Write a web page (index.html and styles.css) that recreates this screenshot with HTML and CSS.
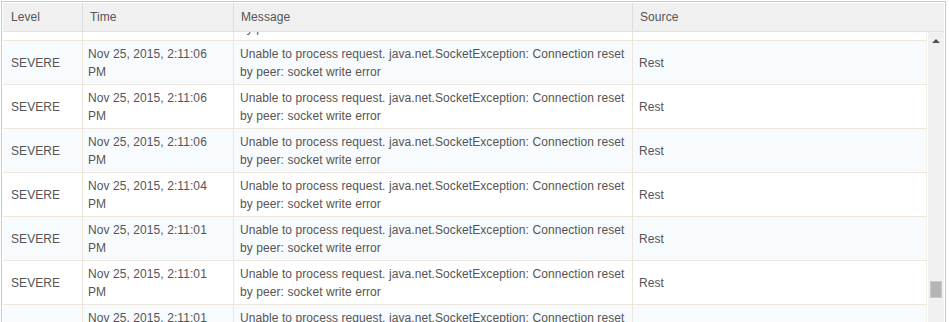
FILE: index.html
```html
<!DOCTYPE html>
<html>
<head>
<meta charset="utf-8">
<link rel="stylesheet" href="styles.css">
</head>
<body>
<div class="grid-wrap">
  <div class="header">
    <div class="hcell c-level">Level</div>
    <div class="hcell c-time">Time</div>
    <div class="hcell c-msg">Message</div>
    <div class="hcell c-src">Source</div>
    <div class="hcell c-pad"></div>
  </div>
  <div class="body">
    <div class="viewport">
      <div class="rows">
        <div class="row odd">
          <div class="cell c-level">SEVERE</div>
          <div class="cell c-time">Nov 25, 2015, 2:11:06<br>PM</div>
          <div class="cell c-msg">Unable to process request. java.net.SocketException: Connection reset<br>by peer: socket write error</div>
          <div class="cell c-src">Rest</div>
        </div>
        <div class="row even">
          <div class="cell c-level">SEVERE</div>
          <div class="cell c-time">Nov 25, 2015, 2:11:06<br>PM</div>
          <div class="cell c-msg">Unable to process request. java.net.SocketException: Connection reset<br>by peer: socket write error</div>
          <div class="cell c-src">Rest</div>
        </div>
        <div class="row odd">
          <div class="cell c-level">SEVERE</div>
          <div class="cell c-time">Nov 25, 2015, 2:11:06<br>PM</div>
          <div class="cell c-msg">Unable to process request. java.net.SocketException: Connection reset<br>by peer: socket write error</div>
          <div class="cell c-src">Rest</div>
        </div>
        <div class="row even">
          <div class="cell c-level">SEVERE</div>
          <div class="cell c-time">Nov 25, 2015, 2:11:06<br>PM</div>
          <div class="cell c-msg">Unable to process request. java.net.SocketException: Connection reset<br>by peer: socket write error</div>
          <div class="cell c-src">Rest</div>
        </div>
        <div class="row odd">
          <div class="cell c-level">SEVERE</div>
          <div class="cell c-time">Nov 25, 2015, 2:11:04<br>PM</div>
          <div class="cell c-msg">Unable to process request. java.net.SocketException: Connection reset<br>by peer: socket write error</div>
          <div class="cell c-src">Rest</div>
        </div>
        <div class="row even">
          <div class="cell c-level">SEVERE</div>
          <div class="cell c-time">Nov 25, 2015, 2:11:01<br>PM</div>
          <div class="cell c-msg">Unable to process request. java.net.SocketException: Connection reset<br>by peer: socket write error</div>
          <div class="cell c-src">Rest</div>
        </div>
        <div class="row odd">
          <div class="cell c-level">SEVERE</div>
          <div class="cell c-time">Nov 25, 2015, 2:11:01<br>PM</div>
          <div class="cell c-msg">Unable to process request. java.net.SocketException: Connection reset<br>by peer: socket write error</div>
          <div class="cell c-src">Rest</div>
        </div>
        <div class="row even">
          <div class="cell c-level">SEVERE</div>
          <div class="cell c-time">Nov 25, 2015, 2:11:01<br>PM</div>
          <div class="cell c-msg">Unable to process request. java.net.SocketException: Connection reset<br>by peer: socket write error</div>
          <div class="cell c-src">Rest</div>
        </div>
      </div>
    </div>
    <div class="scrollbar">
      <div class="arrow-up"></div>
      <div class="track">
        <div class="thumb"></div>
      </div>
    </div>
  </div>
</div>
</body>
</html>
```

FILE: styles.css
```css
html, body {
  margin: 0;
  padding: 0;
  background: #ffffff;
}

body {
  font-family: "Liberation Sans", Arial, sans-serif;
  font-size: 12px;
  letter-spacing: 0.08px;
  color: #555555;
}

.grid-wrap {
  margin: 1px 0 0 1px;
  width: 945px;
  height: 330px;
  box-sizing: border-box;
  border: 1px solid #c9c9c9;
  padding: 1px 1px 0 1px;
  display: flex;
  flex-direction: column;
  overflow: hidden;
}

.header {
  display: grid;
  grid-template-columns: 80px 151px 399px 294px 1fr;
  height: 28px;
  background: #f0f0f0;
  border-bottom: 1px solid #e6dfd3;
  flex: none;
}

.hcell {
  display: flex;
  align-items: center;
  padding: 0 7px;
  border-right: 1px solid #dcdcdc;
  line-height: 17px;
}

.hcell.c-level {
  padding-left: 8px;
}

.hcell.c-src,
.hcell.c-pad {
  border-right: none;
}

.body {
  flex: 1;
  display: flex;
  min-height: 0;
}

.viewport {
  width: 924px;
  overflow: hidden;
  flex: none;
}

.rows {
  margin-top: -35px;
}

.row {
  display: grid;
  grid-template-columns: 80px 151px 399px 294px;
  border-bottom: 1px solid #ede6dc;
}

.row.even {
  background: #f7fbfe;
}

.row.odd {
  background: #ffffff;
}

.cell {
  display: flex;
  align-items: center;
  padding: 4px 6px 3px 6px;
  line-height: 18px;
  border-right: 1px solid #ede6dc;
  white-space: nowrap;
}

.cell.c-level {
  padding-left: 8px;
}

.cell.c-time {
  padding-left: 5px;
}

.cell.c-src {
  border-right: 1px solid #f4f0ea;
}

.scrollbar {
  flex: 1;
  background: #f1f1f1;
  border-left: 1px solid #ffffff;
  display: flex;
  flex-direction: column;
  align-items: center;
}

.arrow-up {
  width: 0;
  height: 0;
  margin-top: 7px;
  border-left: 4px solid transparent;
  border-right: 4px solid transparent;
  border-bottom: 4px solid #505050;
}

.track {
  flex: 1;
  width: 100%;
  display: flex;
  justify-content: center;
}

.thumb {
  width: 12px;
  height: 17px;
  margin-top: 238px;
  background: #b5b5b5;
  border: 1px solid #c8c8c8;
  box-sizing: border-box;
}
```
